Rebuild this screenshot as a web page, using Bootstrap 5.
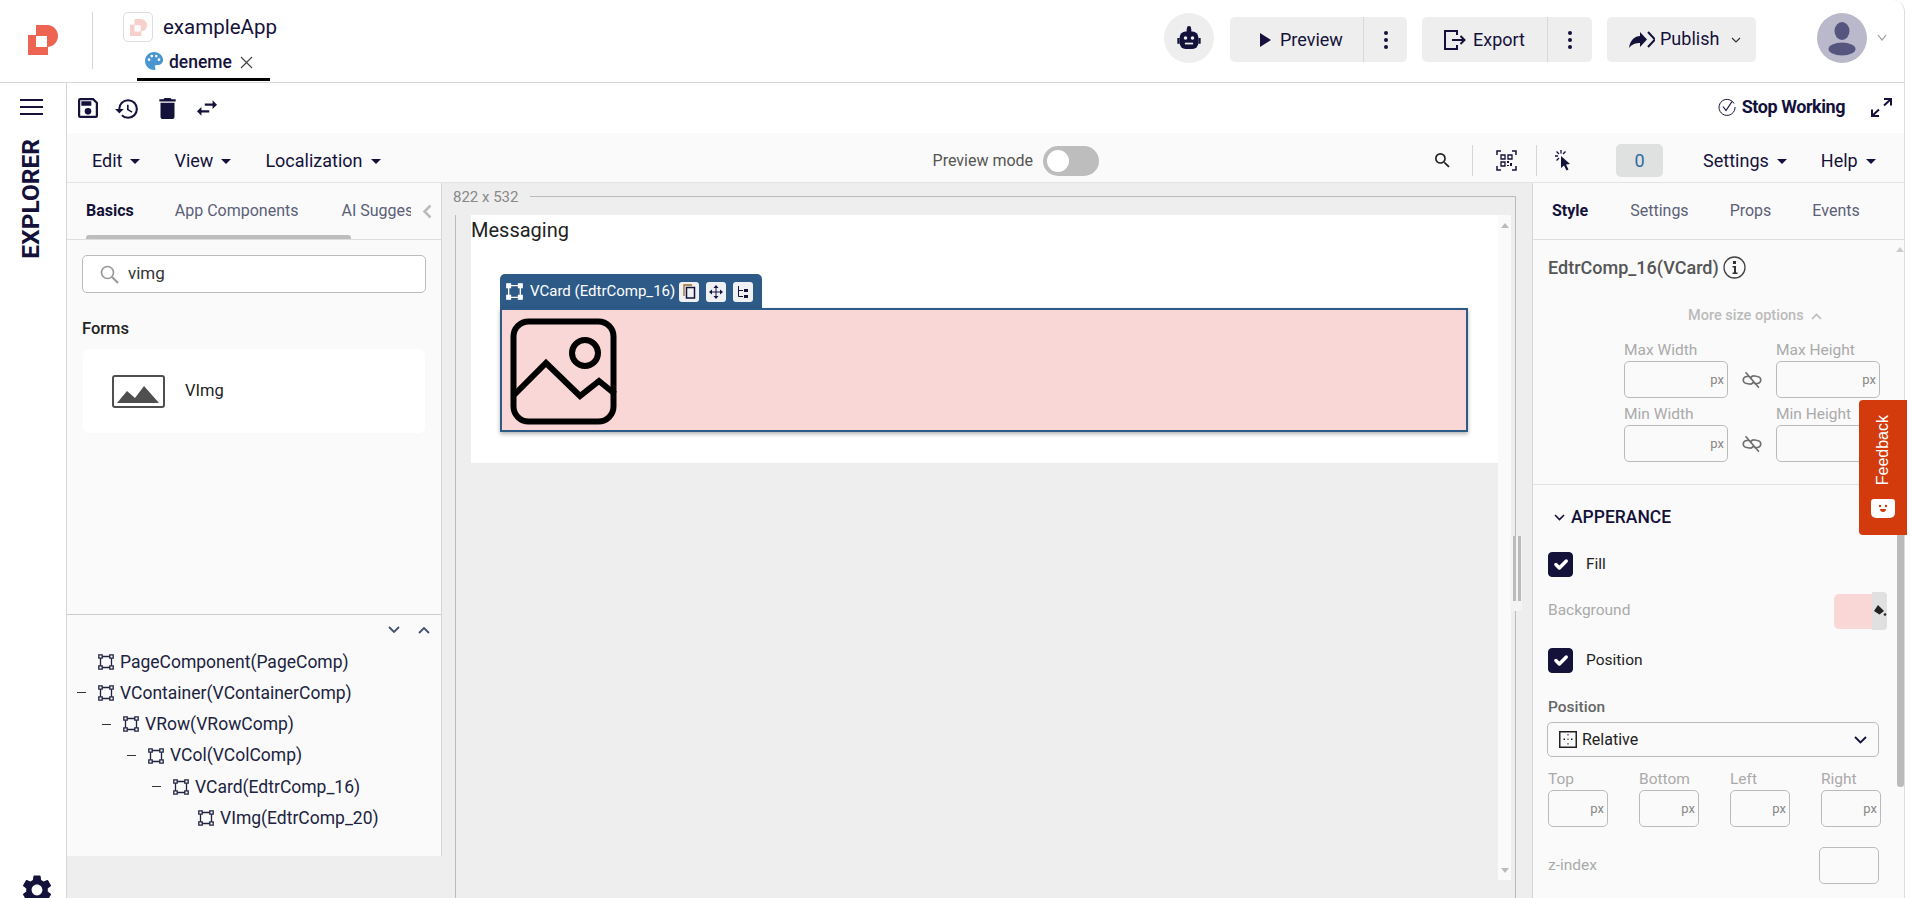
<!DOCTYPE html>
<html lang="en">
<head>
<meta charset="UTF-8">
<meta name="viewport" content="width=device-width, initial-scale=1.0">
<title>exampleApp</title>
<link rel="stylesheet" href="https://cdn.jsdelivr.net/npm/bootstrap@5.3.0/dist/css/bootstrap.min.css">
<style>
    html, body { height: 100%; overflow: hidden; }
    body { background: #fff; font-family: Roboto, "Liberation Sans", sans-serif; color: #14123a; }
    .app-shell { width: 1905px; height: 898px; display: flex; flex-direction: column; border-right: 1px solid #ddd; border-top-right-radius: 12px; overflow: hidden; }
    .ink { fill: #14123a; }

    /* top header */
    .top-head { height: 83px; flex: none; border-bottom: 1px solid #d6d6d6; position: relative; display: flex; }
    .brand-cell { width: 93px; flex: none; padding: 25px 0 0 28px; position: relative; }
    .brand-cell::after { content: ""; position: absolute; left: 92px; top: 12px; height: 57px; width: 1px; background: #d6d6d6; }
    .app-cell { width: 190px; padding-left: 30px; padding-top: 12px; }
    .app-thumb { width: 30px; height: 30px; border: 1px solid #ddd; border-radius: 5px; display: flex; align-items: center; justify-content: center; }
    .app-name { font-size: 20.5px; color: #14123a; line-height: 30px; margin-left: 10px; }
    .page-tab { width: 133px; margin-left: -15px; height: 39px; padding: 10px 0 0 8px; border-bottom: 3px solid #000; display: flex; align-items: flex-start; font-size: 17.5px; line-height: 20px; font-weight: 500; transform: translateX(29px); }
    .page-tab svg { flex: none; }
    .head-actions { margin-left: auto; padding-top: 13px; display: flex; align-items: flex-start; }
    .round-act { width: 50px; height: 50px; background: #eee; border-radius: 50%; display: flex; align-items: center; justify-content: center; }
    .act-group { height: 45px; margin-top: 4px; background: #eee; border-radius: 5px; display: flex; align-items: stretch; font-size: 18px; line-height: 43px; }
    .act-main { display: flex; align-items: center; }
    .act-more { border-left: 1px solid #d8d8d8; display: flex; align-items: center; justify-content: center; }
    .avatar-ball { width: 50px; height: 50px; background: #b9b9cb; border-radius: 50%; display: flex; align-items: center; justify-content: center; margin-left: 61px; }

    /* sidebar */
    .work-row { flex: 1; display: flex; min-height: 0; }
    .side-rail { width: 67px; flex: none; border-right: 1px solid #d6d6d6; position: relative; padding: 16px 0 0 20px; }
    .rail-label { writing-mode: vertical-rl; transform: rotate(180deg); font-size: 24.5px; font-weight: 700; line-height: 22px; margin-top: 24px; }
    .rail-gear { position: absolute; left: 19px; top: 789px; }

    /* toolbars */
    .main-col { flex: 1; min-width: 0; display: flex; flex-direction: column; }
    .tool-row { height: 50px; flex: none; padding: 15px 12px 0 11px; display: flex; align-items: flex-start; }
    .stop-text { font-size: 18px; font-weight: 700; line-height: 20px; letter-spacing: -.45px; margin: -1px 26px 0 6px; }
    .menu-row { height: 50px; flex: none; background: #fafafa; border-bottom: 1px solid #e3e3e3; display: flex; align-items: center; padding-top: 6px; }
    .menu-row .btn { font-size: 18px; color: #14123a; padding: 0; border: 0; line-height: 24px; }
    .menu-row .dropdown-toggle::after { margin-left: 8px; vertical-align: 3px; }
    .preview-label { font-size: 16px; color: #555; }
    .fake-switch { width: 56px; height: 30px; background: #bdbdbd; border-radius: 15px; margin-left: 10px; padding: 4px; }
    .fake-switch span { display: block; width: 22px; height: 22px; background: #fff; border-radius: 50%; }
    .menu-sep { width: 1px; height: 31px; background: #d6d6d6; }
    .count-box { width: 47px; height: 33px; background: #dfe1e1; border-radius: 5px; color: #2e6a9e; font-size: 18px; text-align: center; line-height: 33px; }

    .panels { flex: 1; display: flex; min-height: 0; background: #eee; }

    /* left panel */
    .left-panel { width: 375px; flex: none; height: 673px; background: #fafafa; border-right: 1px solid #d6d6d6; display: flex; flex-direction: column; }
    .panel-tabs { height: 57px; flex: none; border-bottom: 1px solid #ddd; display: flex; align-items: flex-start; position: relative; font-size: 16px; line-height: 20px; padding-top: 18px; white-space: nowrap; }
    .panel-tabs span { color: #5b6078; }
    .panel-tabs .on-tab { color: #14123a; font-weight: 700; }
    .panel-tabs .clip-tab { margin-left: 43px; width: 70px; height: 22px; overflow: hidden; }
    .tabs-thumb { position: absolute; left: 19px; bottom: 0; width: 265px; height: 4px; background: #bdbdbd; border-radius: 3px 3px 0 0; }
    .comp-area { height: 375px; flex: none; padding: 15px 15px 0; border-bottom: 1px solid #ccc; }
    .search-box { height: 38px; background: #fff; border: 1px solid #bbb; border-radius: 5px; display: flex; align-items: center; padding-left: 17px; font-size: 17px; color: #333; }
    .forms-head { font-size: 16.5px; font-weight: 500; margin: 26px 0 10px; line-height: 20px; color: #222; }
    .comp-card { background: #fff; border-radius: 6px; height: 84px; margin-left: 1px; margin-right: 1px; display: flex; align-items: center; padding-left: 29px; font-size: 16.5px; color: #222; }
    .tree-area { flex: 1; position: relative; padding-top: 31px; }
    .tree-line { height: 31.3px; display: flex; align-items: center; font-size: 17.5px; color: #20233f; white-space: nowrap; }
    .tree-dash { width: 9px; height: 1px; background: #333; flex: none; margin-right: 12px; }
    .tree-line svg { margin-right: 6px; flex: none; }
    .tree-carets { position: absolute; top: 11px; right: 11px; display: flex; gap: 18px; }

    /* canvas */
    .canvas-col { flex: 1; min-width: 0; position: relative; display: flex; flex-direction: column; padding-right: 16px; }
    .ruler-row { height: 32px; flex: none; display: flex; padding-left: 11px; }
    .ruler-text { font-size: 15px; color: #888; line-height: 28px; }
    .ruler-line { flex: 1; margin: 13px 0 0 12px; border-top: 1px solid #bbb; border-right: 1px solid #bbb; }
    .frame-box { flex: 1; margin-left: 13px; border-left: 1px solid #bbb; border-right: 1px solid #bbb; padding: 0 4px 0 15px; display: flex; align-items: flex-start; }
    .canvas-sheet { flex: 1; min-width: 0; height: 248px; background: #fff; }
    .scroll-strip { width: 13px; height: 665px; flex: none; background: #fafafa; display: flex; flex-direction: column; justify-content: space-between; align-items: center; padding: 8px 0 7px; }
    .scroll-up, .scroll-down { width: 0; height: 0; border-left: 4.5px solid transparent; border-right: 4.5px solid transparent; }
    .scroll-up { border-bottom: 5px solid #bbb; }
    .scroll-down { border-top: 5px solid #bbb; }
    .sheet-title { font-size: 20px; line-height: 30px; color: #222; }
    .vcard-wrap { margin: 29px 0 0 29px; width: 968px; }
    .vcard-tab { width: 262px; height: 35px; background: #2e5a87; border-radius: 5px 5px 0 0; color: #fff; font-size: 15px; display: flex; align-items: center; padding-left: 6px; white-space: nowrap; }
    .tab-tool { width: 20px; height: 20px; background: #eef0f4; border-radius: 3px; display: flex; align-items: center; justify-content: center; margin-left: 7px; }
    .vcard-body { height: 124px; background: #f8d7d6; border: 2px solid #2e5a87; box-shadow: 0 2px 4px rgba(0,0,0,.3); padding: 8px; margin-top: -1px; }
    .split-handle { position: absolute; left: 1068px; top: 353px; width: 12px; height: 75px; background: #f4f4f4; display: flex; gap: 2px; padding-left: 3px; }
    .split-handle i { width: 3px; height: 65px; background: #bbb; display: block; }

    /* right panel */
    .right-panel { width: 372px; flex: none; background: #fafafa; border-left: 1px solid #d6d6d6; position: relative; overflow: hidden; padding-left: 1px; }
    .right-tabs { height: 57px; margin-left: -1px; border-bottom: 1px solid #ddd; display: flex; font-size: 16px; line-height: 20px; padding: 18px 0 0 19px; color: #5b6078; }
    .right-tabs .on-tab { color: #14123a; font-weight: 700; }
    .comp-title { font-size: 18px; font-weight: 500; color: #555; display: flex; align-items: center; height: 24px; margin: 15px 0 0 14px; }
    .size-toggle { margin: 27px 0 0 154px; font-size: 14.5px; font-weight: 500; color: #bbb; line-height: 20px; }
    .dim-grid { display: grid; grid-template-columns: 104px 48px 104px; margin: 14px 0 0 90px; }
    .dim-label { font-size: 15.5px; color: #aaa; line-height: 21px; }
    .unit-box { height: 37px; border: 1px solid #bbb; border-radius: 5px; display: flex; align-items: center; justify-content: flex-end; padding-right: 3px; font-size: 13px; color: #888; }
    .dim-link { display: flex; align-items: center; justify-content: center; }
    .dim-gap { grid-column: 1 / -1; height: 6px; }
    .section-rule { border-top: 1px solid #e3e3e3; margin: 22px 0 0 -1px; }
    .section-head { font-size: 17.5px; font-weight: 500; line-height: 24px; margin: 20px 0 0 20px; display: flex; align-items: center; }
    .form-check-input.dark-check { width: 25px; height: 25px; margin: 0; background-color: #14123a; border-color: #14123a; border-radius: 4px; float: none; }
    .check-line { display: flex; align-items: center; margin-left: 14px; font-size: 15.5px; color: #222; height: 25px; }
    .check-line label { margin-left: 13px; }
    .bg-line { display: flex; align-items: center; margin: 15px 17px 0 14px; height: 38px; font-size: 15.5px; color: #aaa; }
    .bg-swatch { width: 38px; height: 35px; background: #f8d7d6; border-radius: 5px 0 0 5px; margin-left: auto; }
    .bg-fill { width: 15px; height: 38px; background: #e0e0e0; border-radius: 0 4px 4px 0; display: flex; align-items: center; justify-content: center; }
    .pos-label { font-size: 15.5px; font-weight: 500; color: #666; margin: 24px 0 0 14px; line-height: 20px; }
    .pos-select { height: 35px; width: 332px; margin: 5px 0 0 13px; border: 1px solid #bbb; border-radius: 5px; display: flex; align-items: center; padding: 0 11px; font-size: 16px; color: #222; }
    .pos-select svg:first-child { margin-right: 5px; }
    .pos-select svg:last-child { margin-left: auto; }
    .pos-grid { display: grid; grid-template-columns: 60px 60px 60px 60px; column-gap: 31px; margin: 12px 0 0 14px; }
    .z-line { display: flex; align-items: center; margin: 20px 25px 0 14px; font-size: 15.5px; color: #aaa; }
    .z-line .unit-box { width: 60px; margin-left: auto; }
    .thumb-bar { position: absolute; top: 310px; right: 0; width: 7px; height: 294px; background: #bbb; border-radius: 3px; }
    .side-up { position: absolute; right: 0; top: 64px; width: 0; height: 0; border-left: 4.5px solid transparent; border-right: 4.5px solid transparent; border-bottom: 5px solid #ccc; }
    .feedback-tab { position: absolute; left: 1859px; top: 400px; width: 48px; height: 135px; background: #d33a0c; border-radius: 4px 0 0 4px; color: #fff; display: flex; flex-direction: column; align-items: center; padding-top: 15px; z-index: 5; }
    .feedback-text { writing-mode: vertical-rl; transform: rotate(180deg); font-family: "Liberation Sans", sans-serif; font-size: 16px; line-height: 20px; }
    .feedback-face { width: 24px; height: 19px; background: #fff; border-radius: 3px 3px 5px 5px; margin-top: 14px; display: flex; align-items: center; justify-content: center; }
</style>
</head>
<body>

<svg width="0" height="0" class="position-absolute">
    <defs>
        <symbol id="ic-logo" viewBox="0 0 30 30">
            <path d="M8 0h11a11 11 0 0 1 0 22H8z"/>
            <path d="M0 10h20v20H0z"/>
            <path d="M8 11h11v11H8z" fill="#fff"/>
        </symbol>
        <symbol id="ic-node" viewBox="0 0 16 16">
            <path d="M2.500 2.500h11v11h-11z" fill="none" stroke="currentColor" stroke-width="1.300"/>
            <path d="M.8.8h3.400v3.400H.8zM11.800.8h3.400v3.400h-3.400zM.8 11.800h3.400v3.400H.8zM11.800 11.800h3.400v3.400h-3.400z" fill="#fafafa" stroke="currentColor" stroke-width="1.300"/>
        </symbol>
        <symbol id="ic-link-off" viewBox="0 0 20 16">
            <path d="M7.500 4.500H5a3.500 3.500 0 0 0-.5 7l3 .5c2 .3 3.500-1 4-2.500M12.500 11.500H15a3.500 3.500 0 0 0 .5-7l-3-.5c-2-.3-3.500 1-4 2.500M4 .8l12.500 14.400" fill="none" stroke="#6f6f6f" stroke-width="1.700" stroke-linecap="round"/>
        </symbol>
        <symbol id="ic-dots" viewBox="0 0 6 20">
            <circle cx="3" cy="3" r="2"/><circle cx="3" cy="10" r="2"/><circle cx="3" cy="17" r="2"/>
        </symbol>
    </defs>
</svg>

<div class="app-shell">
    <header class="top-head">
        <div class="brand-cell">
            <svg width="30" height="30" fill="#ee6452"><use href="#ic-logo"/></svg>
        </div>
        <div class="app-cell">
            <div class="d-flex">
                <div class="app-thumb"><svg width="17" height="17" fill="#f8d0cb"><use href="#ic-logo"/></svg></div>
                <div class="app-name">exampleApp</div>
            </div>
            <div class="page-tab">
                <svg width="18" height="18" viewBox="2 2 20 20"><path d="M12 2C6.500 2 2 6.500 2 12s4.500 10 10 10c.9 0 1.700-.7 1.700-1.700 0-.4-.2-.8-.4-1.100-.3-.3-.4-.7-.4-1.100 0-.9.700-1.700 1.700-1.700h2c3.100 0 5.500-2.500 5.500-5.500C22 5.900 17.500 2 12 2zM6.500 12a1.500 1.500 0 1 1 0-3 1.500 1.500 0 0 1 0 3zm3-4a1.500 1.500 0 1 1 0-3 1.500 1.500 0 0 1 0 3zm5 0a1.500 1.500 0 1 1 0-3 1.500 1.500 0 0 1 0 3zm3 4a1.500 1.500 0 1 1 0-3 1.500 1.500 0 0 1 0 3z" fill="#4a97cf"/></svg>
                <span style="margin-left:6px">deneme</span>
                <svg class="ms-2 mt-1" width="13" height="13" viewBox="0 0 13 13"><path d="M1 1l11 11M12 1L1 12" stroke="#444" stroke-width="1.200"/></svg>
            </div>
        </div>
        <div class="head-actions">
            <div class="round-act">
                <svg width="28" height="28" viewBox="0 0 24 24"><circle cx="12" cy="3.500" r="1.800" class="ink"/><path d="M10 4h4v3h-4zM2 12h2v5H2zM20 12h2v5h-2z" class="ink"/><rect x="4" y="6.500" width="16" height="15" rx="5" class="ink"/><circle cx="9" cy="12" r="1.500" fill="#eee"/><circle cx="15" cy="12" r="1.500" fill="#eee"/><rect x="8.500" y="16" width="7" height="1.500" fill="#eee"/></svg>
            </div>
            <div class="act-group ms-3" style="width:177px">
                <div class="act-main" style="width:133px;padding-left:30px">
                    <svg width="11" height="14" viewBox="0 0 11 14"><path d="M0 0l11 7-11 7z" class="ink"/></svg>
                    <span style="margin-left:9px">Preview</span>
                </div>
                <div class="act-more flex-fill"><svg width="6" height="20" class="ink"><use href="#ic-dots"/></svg></div>
            </div>
            <div class="act-group" style="width:170px;margin-left:15px">
                <div class="act-main" style="width:125px;padding-left:21px">
                    <svg width="24" height="22" viewBox="0 0 24 22"><path d="M14 6V2H2v18h12v-4" fill="none" stroke="#14123a" stroke-width="2"/><path d="M9 11h12M17.500 7l4 4-4 4" fill="none" stroke="#14123a" stroke-width="2"/></svg>
                    <span style="margin-left:6px">Export</span>
                </div>
                <div class="act-more flex-fill"><svg width="6" height="20" class="ink"><use href="#ic-dots"/></svg></div>
            </div>
            <div class="act-group" style="width:149px;margin-left:15px;padding-left:22px">
                <svg class="align-self-center" width="26" height="18" viewBox="0 0 26 18"><path d="M0 17C1 9 6 5 11 5V1l7 7.500-7 7.500v-4C7 12 3 13 0 17z" class="ink"/><path d="M19 1l7 7.500-7 7.500" fill="none" stroke="#14123a" stroke-width="2"/></svg>
                <span style="margin-left:5px">Publish</span>
                <svg class="align-self-center" style="margin-left:12px" width="10" height="6" viewBox="0 0 10 6"><path d="M1 1l4 4 4-4" fill="none" stroke="#333" stroke-width="1.200"/></svg>
            </div>
            <div class="avatar-ball">
                <svg width="36" height="36" viewBox="0 0 36 36"><ellipse cx="18" cy="11" rx="7.500" ry="9" fill="#55557f"/><ellipse cx="18" cy="29" rx="13.500" ry="6.500" fill="#55557f"/></svg>
            </div>
            <svg style="margin:21px 17px 0 10px" width="10" height="7" viewBox="0 0 10 7"><path d="M1 1l4 5 4-5" fill="none" stroke="#999" stroke-width="1.200"/></svg>
        </div>
    </header>

    <div class="work-row">
        <aside class="side-rail">
            <svg class="d-block" width="23" height="16" viewBox="0 0 23 16"><path d="M0 1h23M0 8h23M0 15h23" stroke="#14123a" stroke-width="2"/></svg>
            <div class="rail-label">EXPLORER</div>
            <svg class="rail-gear ink" width="36" height="36" viewBox="0 0 24 24"><path d="M19.140 12.940c.04-.3.06-.61.06-.94 0-.32-.02-.64-.07-.94l2.030-1.580a.49.49 0 0 0 .12-.61l-1.920-3.320a.488.488 0 0 0-.59-.22l-2.390.96c-.5-.38-1.030-.7-1.620-.94l-.36-2.540a.484.484 0 0 0-.48-.41h-3.840c-.24 0-.43.17-.47.41l-.36 2.540c-.59.24-1.130.57-1.620.94l-2.390-.96c-.22-.08-.47 0-.59.22L2.740 8.870c-.12.21-.08.47.12.61l2.030 1.580c-.05.3-.09.63-.09.94s.02.64.07.94l-2.030 1.580a.49.49 0 0 0-.12.61l1.920 3.320c.12.22.37.29.59.22l2.390-.96c.5.38 1.030.7 1.620.94l.36 2.540c.05.24.24.41.48.41h3.840c.24 0 .44-.17.47-.41l.36-2.540c.59-.24 1.130-.56 1.620-.94l2.390.96c.22.08.47 0 .59-.22l1.920-3.320c.12-.22.07-.47-.12-.61l-2.010-1.580zM12 15.600c-1.980 0-3.600-1.620-3.600-3.600s1.620-3.600 3.600-3.600 3.600 1.620 3.600 3.600-1.620 3.600-3.600 3.600z"/></svg>
        </aside>

        <div class="main-col">
            <div class="tool-row">
                <svg class="ink" width="20" height="20" viewBox="3 3 18 18"><path d="M17 3H5a2 2 0 0 0-2 2v14a2 2 0 0 0 2 2h14a2 2 0 0 0 2-2V7l-4-4zm2 16H5V5h11.170L19 7.830V19zm-7-7a3 3 0 1 0 0 6 3 3 0 0 0 0-6zM6 6h9v4H6z"/></svg>
                <svg class="ink" style="margin-left:17px" width="24" height="22" viewBox="1 3 22 18"><path d="M13 3a9 9 0 0 0-9 9H1l3.890 3.890.07.14L9 12H6c0-3.870 3.130-7 7-7s7 3.130 7 7-3.130 7-7 7c-1.930 0-3.680-.79-4.940-2.060l-1.420 1.420A8.954 8.954 0 0 0 13 21a9 9 0 0 0 0-18zm-1 5v5l4.280 2.540.72-1.210-3.500-2.080V8H12z"/></svg>
                <svg class="ink" style="margin-left:20px" width="17" height="21" viewBox="5 3 14 18"><path d="M6 19c0 1.100.9 2 2 2h8c1.100 0 2-.9 2-2V7H6v12zM19 4h-3.500l-1-1h-5l-1 1H5v2h14V4z"/></svg>
                <svg class="ink" style="margin-left:21px;margin-top:2px" width="20" height="16" viewBox="3 5 18 14"><path d="M6.990 11 3 15l3.990 4v-3H14v-2H6.990v-3zM21 9l-3.990-4v3H10v2h7.010v3L21 9z"/></svg>
                <svg class="ms-auto" width="18" height="18" viewBox="0 0 18 18"><path d="M16 5.500A8 8 0 1 0 17 9" fill="none" stroke="#14123a" stroke-width="1"/><path d="M5 8.500l3 4 6-9" fill="none" stroke="#14123a" stroke-width="1.200"/></svg>
                <span class="stop-text">Stop Working</span>
                <svg width="21" height="19" viewBox="0 0 21 19"><path d="M13 1h7v6.500M20 1l-7 6.500M8 18H1v-6.500M1 18l7-6.500" fill="none" stroke="#14123a" stroke-width="2"/></svg>
            </div>

            <div class="menu-row">
                <button class="btn dropdown-toggle" style="margin-left:25px">Edit</button>
                <button class="btn dropdown-toggle" style="margin-left:34px">View</button>
                <button class="btn dropdown-toggle" style="margin-left:34px">Localization</button>
                <span class="preview-label" style="margin-left:552px">Preview mode</span>
                <div class="fake-switch"><span></span></div>
                <svg style="margin-left:336px" width="15" height="15" viewBox="3 3 18 18"><path d="M15.500 14h-.79l-.28-.27A6.471 6.471 0 0 0 16 9.500 6.500 6.500 0 1 0 9.500 16c1.610 0 3.090-.59 4.230-1.570l.27.28v.79l5 4.990L20.490 19l-4.990-5zm-6 0C7.010 14 5 11.990 5 9.500S7.010 5 9.500 5 14 7.010 14 9.500 11.990 14 9.500 14z" fill="#222"/></svg>
                <div class="menu-sep" style="margin-left:22px"></div>
                <svg style="margin-left:23px" width="21" height="21" viewBox="0 0 21 21"><path d="M1 5V1h4M16 1h4v4M20 16v4h-4M5 20H1v-4" fill="none" stroke="#14123a" stroke-width="1.500"/><path d="M5 5h4v4H5zM12 5h4v4h-4zM5 12h4v4H5z" fill="none" stroke="#14123a" stroke-width="1.300"/><path d="M11 11h2v2h-2zM14 13h2v3h-2zM11 15h2v1h-2z" class="ink"/></svg>
                <div class="menu-sep" style="margin-left:19px"></div>
                <svg style="margin-left:18px" width="17" height="21" viewBox="0 0 17 21"><path d="M6 6l9 8-4 .5 2.500 5-2 1-2.500-5L6 18z" class="ink"/><path d="M6 0v3.500M0 6h3M1.500 1.500l2.500 2.500M10.500 1.500L8 4M1.500 10.500L4 8" stroke="#14123a" stroke-width="1.300"/></svg>
                <div class="count-box" style="margin-left:44px">0</div>
                <button class="btn dropdown-toggle" style="margin-left:40px">Settings</button>
                <button class="btn dropdown-toggle" style="margin-left:34px">Help</button>
            </div>

            <div class="panels">
                <section class="left-panel">
                    <div class="panel-tabs">
                        <span class="on-tab" style="margin-left:19px">Basics</span>
                        <span style="margin-left:41px">App Components</span>
                        <span class="clip-tab">AI Suggestions</span>
                        <svg style="margin-left:11px;margin-top:3px" width="10" height="15" viewBox="0 0 10 15"><path d="M8.500 1.500L2.500 7.500l6 6" fill="none" stroke="#bbb" stroke-width="2.500"/></svg>
                        <div class="tabs-thumb"></div>
                    </div>
                    <div class="comp-area">
                        <div class="search-box">
                            <svg width="19" height="19" viewBox="0 0 19 19"><circle cx="7.500" cy="7.500" r="6" fill="none" stroke="#999" stroke-width="1.700"/><path d="M12 12l6 6" stroke="#999" stroke-width="2"/></svg>
                            <span style="margin-left:9px">vimg</span>
                        </div>
                        <div class="forms-head">Forms</div>
                        <div class="comp-card">
                            <svg width="53" height="33" viewBox="0 0 53 33"><rect x="1" y="1" width="51" height="31" rx="2" fill="none" stroke="#4f4f4f" stroke-width="2"/><path d="M5 28l10-12 8 7 9-12 15 17z" fill="#4f4f4f"/></svg>
                            <span style="margin-left:20px">VImg</span>
                        </div>
                    </div>
                    <div class="tree-area">
                        <div class="tree-carets">
                            <svg width="12" height="8" viewBox="0 0 12 8"><path d="M1 1l5 5 5-5" fill="none" stroke="#44506f" stroke-width="1.800"/></svg>
                            <svg width="12" height="8" viewBox="0 0 12 8"><path d="M1 7l5-5 5 5" fill="none" stroke="#44506f" stroke-width="1.800"/></svg>
                        </div>
                        <div class="tree-line" style="padding-left:31px"><svg width="16" height="16"><use href="#ic-node"/></svg>PageComponent(PageComp)</div>
                        <div class="tree-line" style="padding-left:10px"><span class="tree-dash"></span><svg width="16" height="16"><use href="#ic-node"/></svg>VContainer(VContainerComp)</div>
                        <div class="tree-line" style="padding-left:35px"><span class="tree-dash"></span><svg width="16" height="16"><use href="#ic-node"/></svg>VRow(VRowComp)</div>
                        <div class="tree-line" style="padding-left:60px"><span class="tree-dash"></span><svg width="16" height="16"><use href="#ic-node"/></svg>VCol(VColComp)</div>
                        <div class="tree-line" style="padding-left:85px"><span class="tree-dash"></span><svg width="16" height="16"><use href="#ic-node"/></svg>VCard(EdtrComp_16)</div>
                        <div class="tree-line" style="padding-left:131px"><svg width="16" height="16"><use href="#ic-node"/></svg>VImg(EdtrComp_20)</div>
                    </div>
                </section>

                <section class="canvas-col">
                    <div class="ruler-row">
                        <span class="ruler-text">822 x 532</span>
                        <div class="ruler-line"></div>
                    </div>
                    <div class="frame-box">
                        <div class="canvas-sheet">
                            <div class="sheet-title">Messaging</div>
                            <div class="vcard-wrap">
                                <div class="vcard-tab">
                                    <svg class="text-white" width="17" height="17"><use href="#ic-node"/></svg>
                                    <span style="margin-left:7px">VCard (EdtrComp_16)</span>
                                    <span class="tab-tool" style="margin-left:4px"><svg width="14" height="15" viewBox="0 0 14 15"><path d="M2 12V1h8" fill="none" stroke="#9a6a2a" stroke-width="1.300"/><path d="M4.500 3.500h8v10.500h-8z" fill="none" stroke="#14123a" stroke-width="1.500"/></svg></span>
                                    <span class="tab-tool"><svg width="14" height="14" viewBox="0 0 14 14"><path d="M7 0l2.500 3h-5zM7 14l2.500-3h-5zM0 7l3-2.500v5zM14 7l-3-2.500v5zM6.500 3h1v8h-1zM3 6.500h8v1H3z" class="ink"/></svg></span>
                                    <span class="tab-tool"><svg width="12" height="12" viewBox="0 0 12 12"><path d="M1.500 0v10.500H6M1.500 4.500H6" fill="none" stroke="#14123a" stroke-width="1"/><path d="M7 3h4v3H7zM7 9h4v3H7z" class="ink"/></svg></span>
                                </div>
                                <div class="vcard-body">
                                    <svg class="d-block" width="107" height="107" viewBox="0 0 107 107"><rect x="3.500" y="3.500" width="100" height="100" rx="15" fill="none" stroke="#000" stroke-width="6"/><circle cx="75" cy="35" r="13" fill="none" stroke="#000" stroke-width="6"/><path d="M4 77l32-32 34 33 19-15 16 13" fill="none" stroke="#000" stroke-width="6"/></svg>
                                </div>
                            </div>
                        </div>
                        <div class="scroll-strip"><span class="scroll-up"></span><span class="scroll-down"></span></div>
                    </div>
                    <div class="split-handle"><i></i><i></i></div>
                </section>

                <section class="right-panel">
                    <div class="right-tabs">
                        <span class="on-tab">Style</span>
                        <span style="margin-left:42px">Settings</span>
                        <span style="margin-left:41px">Props</span>
                        <span style="margin-left:41px">Events</span>
                    </div>
                    <div class="comp-title">
                        EdtrComp_16(VCard)
                        <svg class="ms-1" width="23" height="23" viewBox="0 0 23 23"><circle cx="11.500" cy="11.500" r="10.500" fill="none" stroke="#444" stroke-width="1.300"/><path d="M10 5h3v3h-3zM9.500 10H13v6.500h1.500V18h-5v-1.500H11V11.500H9.500z" fill="#333"/></svg>
                    </div>
                    <div class="size-toggle">More size options <svg class="ms-1 align-baseline" width="11" height="7" viewBox="0 0 11 7"><path d="M1 6l4.500-4.500L10 6" fill="none" stroke="#bbb" stroke-width="1.600"/></svg></div>
                    <div class="dim-grid">
                        <div class="dim-label">Max Width</div><div></div><div class="dim-label">Max Height</div>
                        <div class="unit-box">px</div><div class="dim-link"><svg width="20" height="16"><use href="#ic-link-off"/></svg></div><div class="unit-box">px</div>
                        <div class="dim-gap"></div>
                        <div class="dim-label">Min Width</div><div></div><div class="dim-label">Min Height</div>
                        <div class="unit-box">px</div><div class="dim-link"><svg width="20" height="16"><use href="#ic-link-off"/></svg></div><div class="unit-box">px</div>
                    </div>
                    <div class="section-rule"></div>
                    <div class="section-head">
                        <svg style="margin-right:6px" width="11" height="7" viewBox="0 0 11 7"><path d="M1 1l4.500 4.500L10 1" fill="none" stroke="#14123a" stroke-width="1.600"/></svg>
                        APPERANCE
                    </div>
                    <div class="check-line" style="margin-top:23px"><input class="form-check-input dark-check" type="checkbox" id="chkFill" checked><label for="chkFill">Fill</label></div>
                    <div class="bg-line">
                        Background
                        <div class="bg-swatch"></div>
                        <div class="bg-fill"><svg width="14" height="14" viewBox="0 0 14 14"><path d="M5 1l6 6-4.500 3.500L1 7z" fill="#222"/><circle cx="12" cy="10.500" r="1.300" fill="#222"/></svg></div>
                    </div>
                    <div class="check-line" style="margin-top:18px"><input class="form-check-input dark-check" type="checkbox" id="chkPos" checked><label for="chkPos">Position</label></div>
                    <div class="pos-label">Position</div>
                    <div class="pos-select">
                        <svg width="18" height="17" viewBox="0 0 18 17"><rect x=".75" y=".75" width="16.500" height="15.500" fill="none" stroke="#222" stroke-width="1.500"/><path d="M8.500 3h1v1.500h-1zM8.500 7.500h1V9h-1zM8.500 12h1v1.500h-1zM4.500 7.500H6V9H4.500zM12 7.500h1.500V9H12z" fill="#222"/></svg>
                        Relative
                        <svg width="13" height="8" viewBox="0 0 13 8"><path d="M1 1l5.500 5.500L12 1" fill="none" stroke="#14123a" stroke-width="1.800"/></svg>
                    </div>
                    <div class="pos-grid">
                        <div class="dim-label">Top</div><div class="dim-label">Bottom</div><div class="dim-label">Left</div><div class="dim-label">Right</div>
                        <div class="unit-box">px</div><div class="unit-box">px</div><div class="unit-box">px</div><div class="unit-box">px</div>
                    </div>
                    <div class="z-line">z-index<div class="unit-box"></div></div>
                    <span class="side-up"></span>
                    <div class="thumb-bar"></div>
                </section>
            </div>
        </div>
    </div>
</div>

<div class="feedback-tab">
    <span class="feedback-text">Feedback</span>
    <span class="feedback-face"><svg width="12" height="9" viewBox="0 0 12 9"><circle cx="3" cy="2" r="1.200" fill="#d33a0c"/><circle cx="9" cy="2" r="1.200" fill="#d33a0c"/><path d="M3 5h6a3 3 0 0 1-6 0z" fill="#d33a0c"/></svg></span>
</div>

<script src="https://cdn.jsdelivr.net/npm/bootstrap@5.3.0/dist/js/bootstrap.bundle.min.js"></script>
</body>
</html>
